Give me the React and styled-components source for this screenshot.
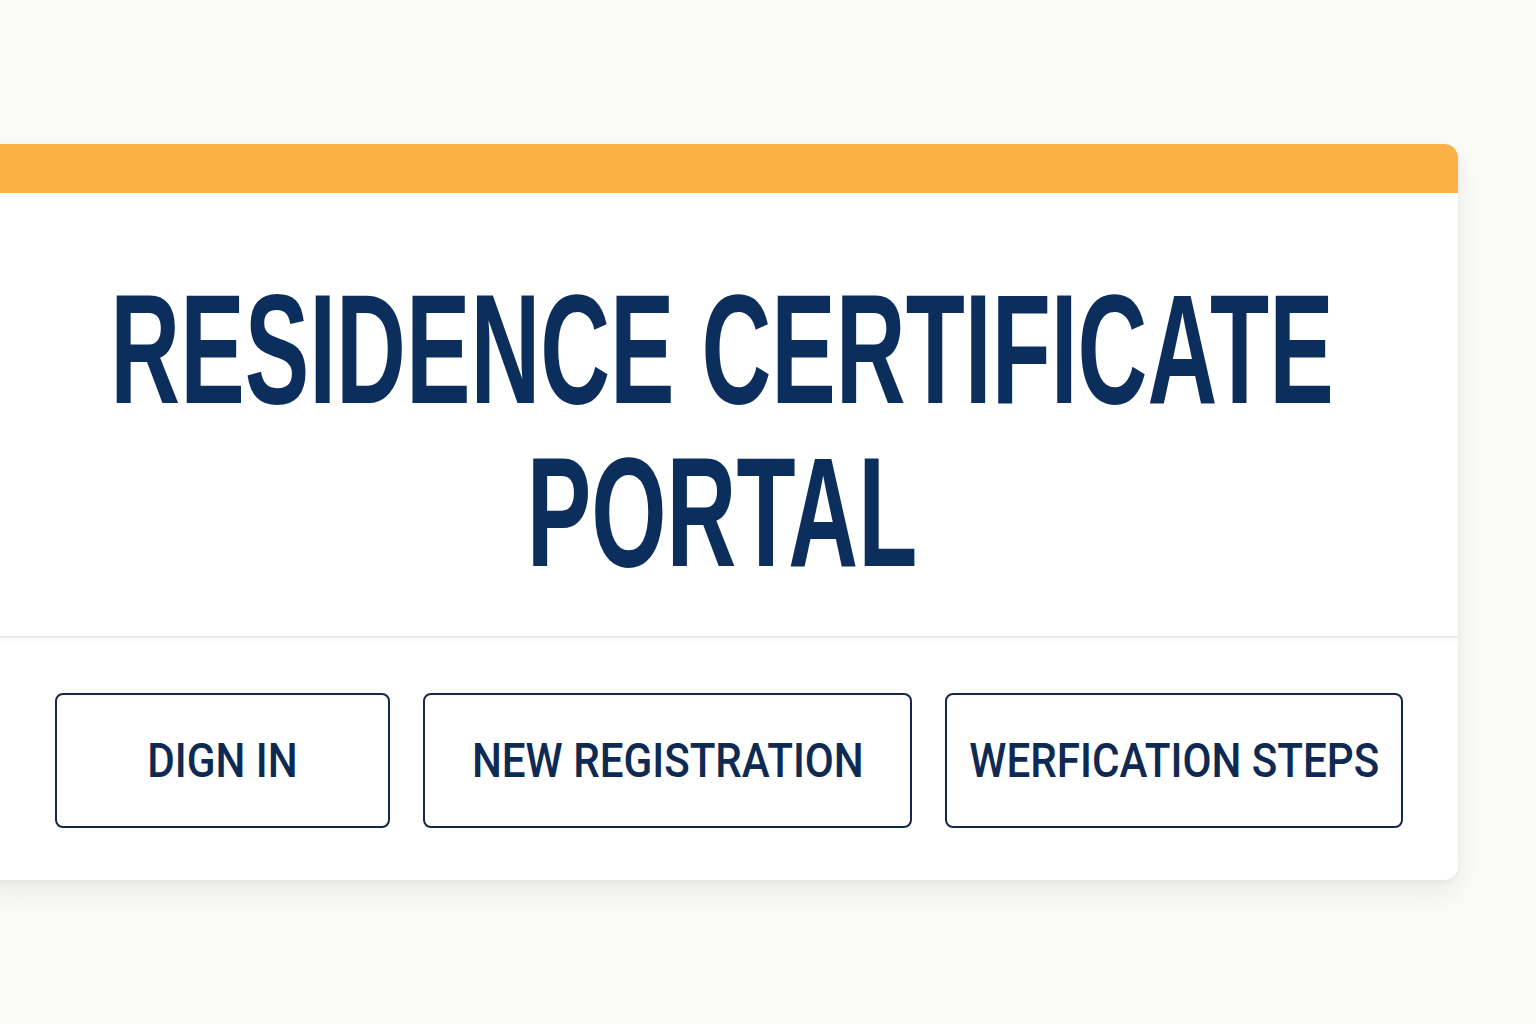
import React from "react";
import styled, { createGlobalStyle } from "styled-components";

const GlobalStyle = createGlobalStyle`
  html, body {
    margin: 0;
    padding: 0;
    background: #fbfbf8;
    overflow-x: hidden;
  }
  * {
    box-sizing: border-box;
  }
`;

const buttons = [
  { label: "DIGN IN", width: 335 },
  { label: "NEW REGISTRATION", width: 489 },
  { label: "WERFICATION STEPS", width: 458 },
];

const App = () => {
  return (
    <>
      <GlobalStyle />
      <Page>
        <Card>
          <AccentBar />
          <TitleSection>
            <Title>
              <TitleLine>RESIDENCE CERTIFICATE</TitleLine>
              <TitleLine>PORTAL</TitleLine>
            </Title>
          </TitleSection>
          <ActionRow>
            {buttons.map((b) => (
              <ActionButton key={b.label} $width={b.width}>
                <ButtonLabel>{b.label}</ButtonLabel>
              </ActionButton>
            ))}
          </ActionRow>
        </Card>
      </Page>
    </>
  );
};

const Page = styled.div`
  min-height: 100vh;
  padding-top: 144px;
  background: #fbfbf8;
`;

const Card = styled.div`
  width: 1472px;
  margin-left: -14px;
  background: #ffffff;
  border-radius: 0 14px 14px 0;
  overflow: hidden;
  box-shadow: 0 14px 32px rgba(40, 40, 30, 0.08), 0 2px 6px rgba(40, 40, 30, 0.05);
`;

const AccentBar = styled.div`
  height: 49px;
  background: #fbb146;
`;

const TitleSection = styled.div`
  padding: 75px 0 42px;
  border-bottom: 2px solid #e7e7e4;
  box-shadow: 0 2px 3px rgba(0, 0, 0, 0.03);
`;

const Title = styled.h1`
  margin: 0;
  display: flex;
  flex-direction: column;
  align-items: center;
  font-family: "Liberation Sans", Arial, sans-serif;
  font-weight: 700;
  font-size: 156px;
  line-height: 163px;
  color: #0b2e5c;
  transform: scaleX(0.62);
`;

const TitleLine = styled.span`
  white-space: nowrap;
`;

const ActionRow = styled.div`
  display: flex;
  gap: 33px;
  padding: 55px 0 52px 69px;
`;

const ActionButton = styled.button`
  width: ${(p) => p.$width}px;
  height: 135px;
  display: flex;
  align-items: center;
  justify-content: center;
  background: #ffffff;
  border: 2px solid #14284b;
  border-radius: 8px;
  padding: 0;
  cursor: pointer;
`;

const ButtonLabel = styled.span`
  display: inline-block;
  white-space: nowrap;
  font-family: Roboto, "Liberation Sans", sans-serif;
  font-weight: 500;
  font-size: 49px;
  line-height: 1;
  color: #0f2a52;
  transform: scaleX(0.86);
`;

export default App;
